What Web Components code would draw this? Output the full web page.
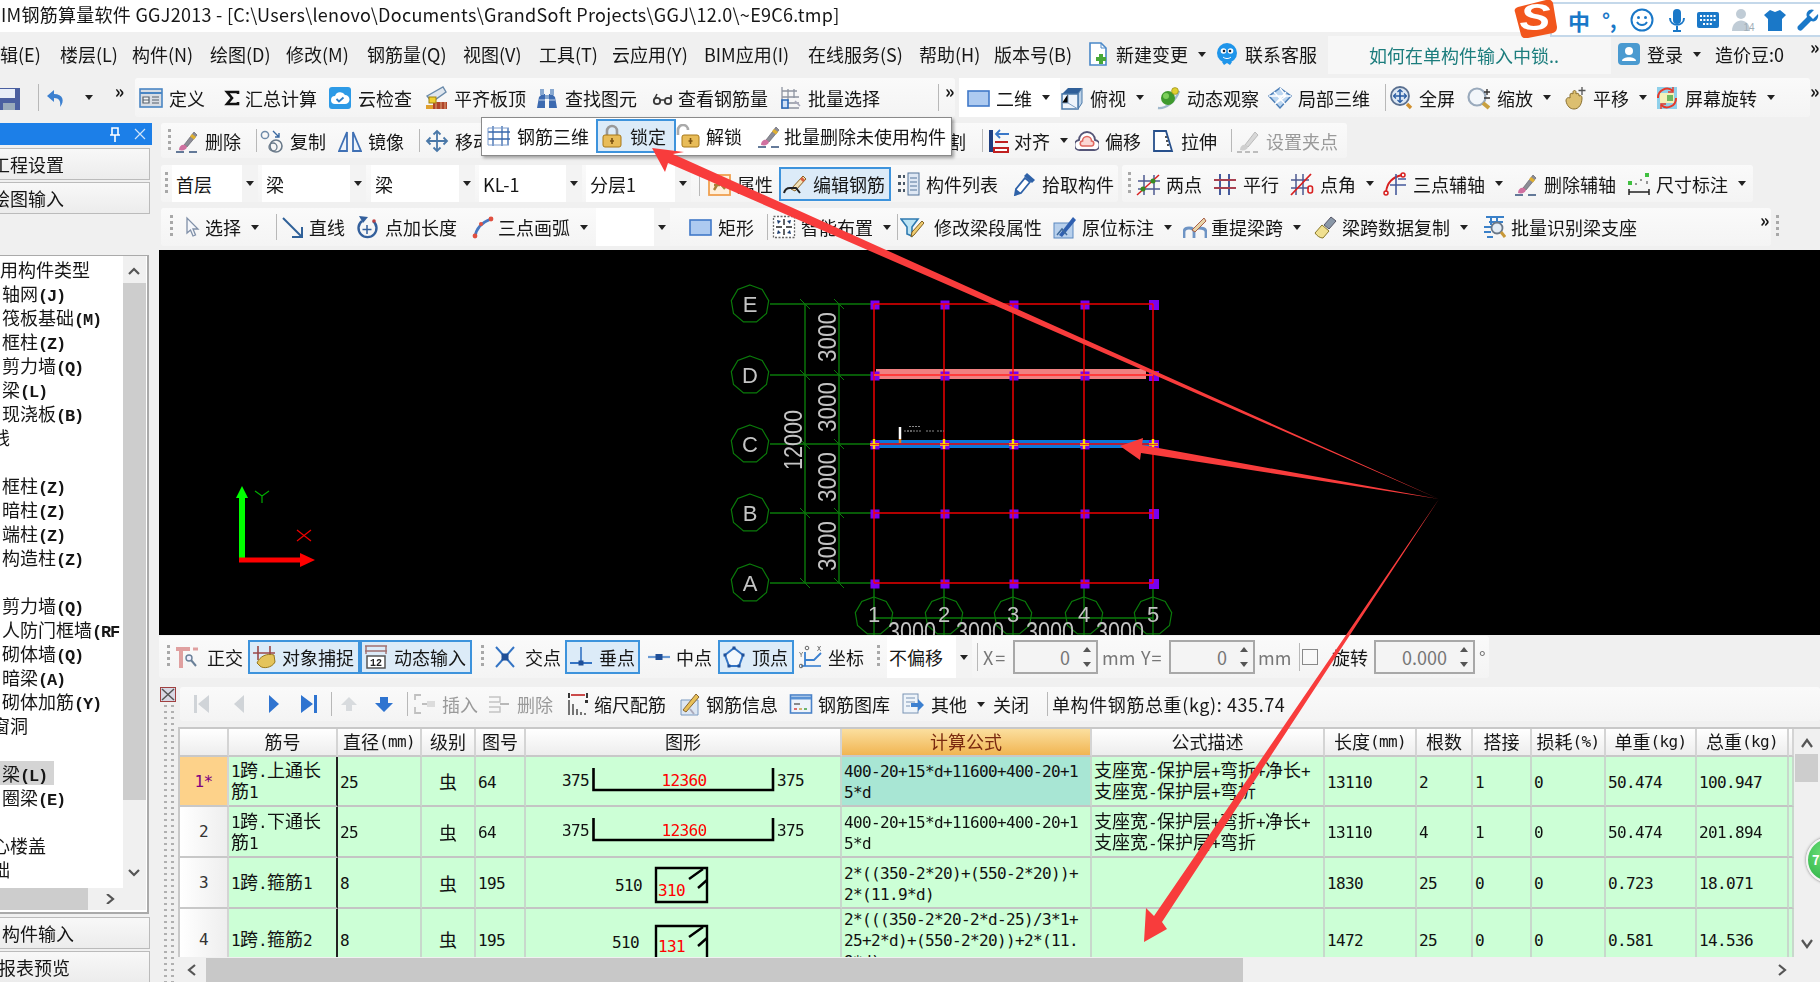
<!DOCTYPE html>
<html lang="zh">
<head>
<meta charset="utf-8">
<title>GGJ2013</title>
<style>
  html, body { margin: 0; width: 1820px; height: 982px; overflow: hidden; background: #f0f0f0; }
  body { font: 18px "Noto Sans CJK SC", "Noto Sans", sans-serif; color: #161616; }
</style>
</head>
<body>
<ggj-app></ggj-app>
<script>
const mix = s => s.replace(/[\x21-\x7e]+/g, m => `<i>${m}</i>`).replace(/\n/g, '<br>');

const BRUSH = '<path d="M9 16L19 3l3 3-10 12z" fill="#8c8c96" stroke="#55555f" stroke-width=".6"/><path d="M17 5l4 3-2 2.500-4-3z" fill="#e0b030"/><path d="M4 21c0-4 3-6 6-5l2 2c-1 3-4 4-8 3z" fill="#d070a0"/><path d="M1 23h8M14 23h8" stroke="#33507a" stroke-width="1.4"/>';

const ICONS = {
  def: '<rect x="1" y="3" width="22" height="18" fill="#d8dde4" stroke="#4a86c4" stroke-width="1.6"/><path d="M1 7h22" stroke="#4a86c4" stroke-width="2"/><path d="M4 11h6v6H4zM13 11h7M13 14h7M13 17h7M4 14h6" fill="#f4f4f4" stroke="#55606c" stroke-width="1.2"/>',
  sigma: '<path d="M18 8V6H7l5 6-5 6h11v-2" fill="none" stroke="#111" stroke-width="2.6"/>',
  cloud: '<rect x="1" y="1" width="22" height="22" rx="3" fill="#2d9ae6"/><path d="M7 18a4 4 0 0 1 0-8 5.500 5.500 0 0 1 10-1 4.500 4.500 0 0 1 0 9z" fill="#fff"/><path d="M8.500 13l2.500 2.500 4.500-4" fill="none" stroke="#2d7fc8" stroke-width="1.8"/>',
  level: '<rect x="9" y="16" width="14" height="7" fill="#b0442a"/><path d="M2 23v-4h7v4z" fill="#e0a030"/><path d="M12 16v7M17 16v7M21 16v7" stroke="#e8c090" stroke-width=".8"/><path d="M3 10L19 1l3 5L8 16z" fill="#dfe6ee" stroke="#6a8aaa" stroke-width="1.4"/><rect x="5" y="11" width="7" height="6" fill="#f0d030" stroke="#a08010"/>',
  binoc: '<path d="M2 22l2-11 3-3h3v14zM22 22l-2-11-3-3h-3v14z" fill="#3c6ab0"/><path d="M5 3h4v6H5zM15 3h4v6h-4zM10 9h4v4h-4z" fill="#88a8d0"/><path d="M4 14h6M14 14h6" stroke="#c4d4ea"/>',
  glasses: '<circle cx="7" cy="15" r="3.200" fill="none" stroke="#3a3a3a" stroke-width="1.8"/><circle cx="18" cy="15" r="3.200" fill="none" stroke="#3a3a3a" stroke-width="1.8"/><path d="M10 14h4M4 14l3-6M21 14v-5" fill="none" stroke="#3a3a3a" stroke-width="1.6"/>',
  bulk: '<path d="M3 1v22M3 5h15M3 11h17M3 17h17M3 22h17M9 3v12M15 3v9" stroke="#8e94a0" stroke-width="1.3"/><path d="M3 14h6v8H3z" fill="#cfe0f6" stroke="#2868b8" stroke-width="1.6"/><path d="M16 15l5 5" stroke="#aab" stroke-width="1.6"/>',
  d2: '<rect x="2" y="5" width="21" height="15" fill="#adcaf0" stroke="#4078c8" stroke-width="1.6"/>',
  view: '<path d="M2 8l6-6h14l-4 6z" fill="#2f5f98"/><path d="M18 8l4-6v15l-4 6z" fill="#bcd2e8" stroke="#4a78a8"/><path d="M2 8h16v15H2z" fill="#eef4fa" stroke="#4a78a8" stroke-width="1.5"/><path d="M8 8v9H2M8 17l10 6" stroke="#7ea0c4"/>',
  orbit: '<path d="M1 22c8 1 18-7 21-17" fill="none" stroke="#a0b8cc" stroke-width="2.4"/><circle cx="11" cy="12" r="7" fill="#3f9a2e"/><circle cx="9" cy="10" r="3" fill="#7ccf5a"/><circle cx="18" cy="5" r="3.400" fill="#e0d030" stroke="#8a8010" stroke-width=".6"/>',
  part3d: '<path d="M12 2l11 8-11 12L1 10z" fill="#bcd6f0" stroke="#4f80b8" stroke-width="1.5"/><path d="M6 6l11 12M12 2l6 8-11 8M1 10h22M18 6L7 18" fill="none" stroke="#fff" stroke-width="1.3"/>',
  full: '<circle cx="11" cy="10" r="9" fill="#dde8f4" stroke="#5a7090" stroke-width="1.8"/><path d="M11 4v12M5 10h12" stroke="#2458a0" stroke-width="1.6"/><path d="M8.500 6L11 3.500 13.500 6M8.500 14l2.500 2.500 2.500-2.500M7 7.500L4.500 10 7 12.500M15 7.500l2.500 2.500-2.500 2.500" fill="none" stroke="#2458a0" stroke-width="1.2"/><path d="M18 18l4 4" stroke="#d09030" stroke-width="3.400"/>',
  zoom: '<circle cx="10" cy="11" r="8.500" fill="#f2f6fa" stroke="#9aaabc" stroke-width="2.2"/><path d="M16 17l6 5" stroke="#c8a040" stroke-width="4"/><path d="M20 3v6M17 6h6M17 12h6" stroke="#333" stroke-width="1.4"/>',
  pan: '<path d="M3 15c0-3 2-4 4-3V9c0-2 2-2 3-1V6c0-2 3-2 3 0v2c1-1 3-1 3 1v1c2-1 3 0 3 2 0 6-3 11-8 11-4 0-7-3-8-8z" fill="#dcbf70" stroke="#8a7030"/><path d="M19 1v8M15.500 4.500h7" stroke="#555" stroke-width="1.3"/>',
  rot: '<rect x="2" y="1" width="20" height="22" fill="#8fd0ea"/><rect x="5" y="7" width="14" height="10" fill="#f4f0b8"/><path d="M12 9h6v6h-6z" fill="#70b860"/><path d="M3 12a9 9 0 0 1 15-7M21 12a9 9 0 0 1-15 7" fill="none" stroke="#e83828" stroke-width="2"/><path d="M18 1v5h-5M6 23v-5h5" fill="none" stroke="#e83828" stroke-width="1.4"/>',
  brush: BRUSH,
  graypen: '<path d="M9 16L19 3l3 3-10 12z" fill="#d8d8d8" stroke="#bbb"/><path d="M4 21c0-4 3-6 6-5l2 2c-1 3-4 4-8 3z" fill="#cfcfcf"/><path d="M1 23h5M9 23h5M17 23h5" stroke="#aaa" stroke-width="1.6"/>',
  copy: '<circle cx="5" cy="6" r="3.600" fill="none" stroke="#6f8aa8" stroke-width="1.5"/><circle cx="16" cy="17" r="6" fill="none" stroke="#6a7a8a" stroke-width="1.6"/><circle cx="13" cy="18" r="4" fill="none" stroke="#6a7a8a" stroke-width="1.3"/><path d="M13 2l6 6m0-4v4h-4" fill="none" stroke="#3a68a0" stroke-width="1.4"/>',
  mirror: '<path d="M1 22L9 3v19zM23 22L15 3v19z" fill="#eef4fb" stroke="#3f70b4" stroke-width="1.8"/>',
  move: '<path d="M12 2v20M2 12h20" stroke="#4a78a8" stroke-width="1.8"/><path d="M8.500 5.500L12 2l3.500 3.500M8.500 18.500L12 22l3.500-3.500M5.500 8.500L2 12l3.500 3.500M18.500 8.500L22 12l-3.500 3.500" fill="none" stroke="#4a78a8" stroke-width="1.8"/>',
  r3d: '<path d="M6 2v20M15 2v20M21 4v17M1 8h22M1 15h22" stroke="#3868ac" stroke-width="1.3"/><path d="M1 4l21 0M1 21h21M1 4v17" stroke="#7c9ccc"/>',
  lock: '<path d="M7 12V7a5 5 0 0 1 10 0v5" fill="none" stroke="#999" stroke-width="2.600"/><rect x="3" y="11" width="18" height="12" rx="2" fill="#e8bc58" stroke="#a87818"/><path d="M12 14v6M10 17h4" stroke="#7a5010" stroke-width="1.6"/>',
  unlock: '<path d="M2 11V6a5 5 0 0 1 10 0" fill="none" stroke="#aaa" stroke-width="2.600"/><rect x="6" y="11" width="17" height="12" rx="2" fill="#e8bc58" stroke="#a87818"/><path d="M14.500 14v6M12.500 17h4" stroke="#7a5010" stroke-width="1.6"/>',
  prop: '<rect x="2" y="3" width="21" height="20" fill="#fff0dc" stroke="#f0a050" stroke-width="1.8"/><path d="M7 18l5-8 6 7M7 13h6" fill="none" stroke="#a88038" stroke-width="2.400"/>',
  edit: '<path d="M8 17L20 4l3 3-11 12z" fill="#f2e2b8" stroke="#8a6020"/><path d="M18 6l3 3" stroke="#d86040" stroke-width="3"/><path d="M1 21c1-4 3-5 6-5h6l4 5" fill="none" stroke="#222" stroke-width="2"/>',
  list: '<path d="M1 3h3v3H1zM6 3h2v3H6zM1 10h3v3H1zM6 10h2v3H6zM1 17h3v3H1zM6 17h2v3H6z" fill="#4a5866"/><rect x="11" y="1" width="11" height="22" fill="#dfe8f4" stroke="#54749a"/><path d="M13 6h7M13 10h7M13 14h7M13 18h7" stroke="#54749a"/>',
  pick: '<path d="M3 23l1-6 9-11 5 4-9 11z" fill="#fff" stroke="#2f62a8" stroke-width="1.8"/><path d="M3 23l1-6 5 4z" fill="#2f62a8"/><path d="M12 4l3-3 8 7-3 3z" fill="#2f62a8"/>',
  two: '<path d="M8 3v20M18 3v20M2 9h22M2 17h22" stroke="#4e5a90" stroke-width="1.5"/><path d="M1 23L23 3" stroke="#d82020" stroke-width="1.5"/><circle cx="7" cy="17" r="2.500" fill="#3a8a20"/><circle cx="17" cy="9" r="2.500" fill="#3a8a20"/>',
  par: '<path d="M7 2v21M16 2v21" stroke="#465a9c" stroke-width="2"/><path d="M1 8h22M1 16h22" stroke="#a84050" stroke-width="2"/>',
  ang: '<path d="M6 2v21M13 2v21M1 8h18M1 16h18" stroke="#4e5a90" stroke-width="1.500"/><path d="M1 23L21 2" stroke="#d82020" stroke-width="1.8"/><rect x="18" y="14" width="4.500" height="7" rx="2" fill="none" stroke="#d82020" stroke-width="1.6"/>',
  arc3: '<path d="M3 20C4 11 10 5 19 3" fill="none" stroke="#d82020" stroke-width="1.800"/><path d="M13 2v21M7 13h16M15 7h8" stroke="#465a9c" stroke-width="1.600"/><circle cx="3" cy="21" r="2" fill="none" stroke="#d82020" stroke-width="1.500"/><circle cx="20" cy="3" r="2" fill="none" stroke="#d82020" stroke-width="1.500"/>',
  dim: '<path d="M2 20h20M2 17v6M22 17v6" stroke="#222" stroke-width="1.500"/><path d="M1 9h4v4H1zM18 1h4v4h-4z" fill="#40c040"/><path d="M8 12h2M13 8h2M20 9v3" stroke="#777" stroke-width="1.500"/>',
  cursor: '<path d="M6 3v15l3.500-3 2.500 6 2.500-1-2.500-6h5z" fill="#f4f6fa" stroke="#8090a8" stroke-width="1.300"/>',
  line: '<path d="M2 3l19 19" stroke="#2f6098" stroke-width="2"/><path d="M21 12v10H11" fill="none" stroke="#2f6098" stroke-width="2"/>',
  ptlen: '<path d="M7 6a9 9 0 1 0 11 0" fill="none" stroke="#34609c" stroke-width="2.400"/><path d="M12 10v9M7.500 14.500h9" stroke="#34609c" stroke-width="1.500"/><path d="M4 1l9 1-5 6z" fill="#34609c"/><circle cx="19" cy="6" r="1.800" fill="#c04040"/>',
  arc: '<path d="M4 22C5 14 9 8 20 4" fill="none" stroke="#4878c0" stroke-width="2.800"/><circle cx="4" cy="21" r="2.400" fill="#e05040"/><circle cx="10" cy="9" r="2" fill="#e05040"/><circle cx="20" cy="4" r="2.400" fill="#e05040"/>',
  rect: '<rect x="2" y="5" width="21" height="15" fill="#adcaf0" stroke="#4078c8" stroke-width="1.600"/>',
  smart: '<rect x="1.500" y="1.500" width="21" height="21" fill="#fff" stroke="#666" stroke-dasharray="2 1.500" stroke-width="1.300"/><path d="M12 4v6M12 14v6M4 12h6M14 12h6" stroke="#222" stroke-width="1.400"/><path d="M5 5l4 1-3 3zM19 5l-1 4-3-3zM5 19l1-4 3 3zM19 19l-4-1 3-3z" fill="#1f3f70"/>',
  modseg: '<path d="M1 4h17l-6 8v9l-5-2v-7z" fill="#bde4f4" stroke="#2f7ab0" stroke-width="1.600"/><path d="M11 22l1-5L22 6l2 2-10 12z" fill="#f0cc70" stroke="#806020"/>',
  inplace: '<rect x="2" y="8" width="19" height="15" fill="#b8d0ec" stroke="#5a88c0"/><path d="M7 20L21 2l3 3L10 22z" fill="#3060b0"/><path d="M5 20l5-6 5 6" fill="none" stroke="#3f6a9c" stroke-width="1.500"/>',
  reext: '<path d="M1 23v-6c0-3 2-4 5-4s5 1 5 4v6M11 23v-6c0-3 2-4 5-4s7 1 7 4v6" fill="none" stroke="#6e94c4" stroke-width="2.800"/><path d="M9 15L21 3l2 3-11 11z" fill="#e8d4a8" stroke="#a86048"/>',
  spancopy: '<path d="M2 18l7-8 7 6-6 7c-3 0-6-2-8-5z" fill="#f0e090" stroke="#88782a"/><path d="M11 10l7-8 5 4-7 8z" fill="#8a98a8" stroke="#556"/>',
  support: '<path d="M4 2h18M7 7h14M2 12h9M2 17h7M5 22h6" stroke="#3a80c8" stroke-width="2"/><path d="M9 2v8M15 2v5" stroke="#3a80c8" stroke-width="2"/><circle cx="15" cy="13" r="5.500" fill="#e4ecf4" stroke="#6a7888" stroke-width="1.800"/><path d="M19 17l4 5" stroke="#c89838" stroke-width="3"/>',
  align: '<path d="M3 1v22" stroke="#1f3f80" stroke-width="4"/><path d="M6 19h14v4H6z" fill="#fff" stroke="#c02020" stroke-width="2"/><path d="M7 13h13" stroke="#c02020" stroke-width="2"/><path d="M21 5H8M12 1L8 5l4 4" fill="none" stroke="#3a78c8" stroke-width="1.800"/>',
  offset: '<path d="M5 21a5 5 0 0 1-1-10 8 8 0 0 1 16 0 5 5 0 0 1-1 10z" fill="#fff" stroke="#557" stroke-width="1.800"/><path d="M8 17a2.500 2.500 0 0 1-.500-5 4.500 4.500 0 0 1 9 0 2.500 2.500 0 0 1-.500 5z" fill="#fbd8d4" stroke="#e06860" stroke-width="1.600"/>',
  stretch: '<path d="M3 22V2h12l6 20z" fill="#fff" stroke="#27508c" stroke-width="1.800"/><path d="M14 8h2M15 12h2M16 16h2" stroke="#555" stroke-width="1.800"/>',
  ortho: '<path d="M1 4h14M6 4v19" stroke="#e0a0a0" stroke-width="4"/><path d="M18 4h5" stroke="#e0a0a0" stroke-width="3"/><circle cx="14" cy="13" r="3" fill="#eef" stroke="#6a8098" stroke-width="1.400"/><path d="M16 15l5 6" stroke="#6a8098" stroke-width="2"/>',
  snap: '<path d="M1 8h22M6 1v14M18 1v14" stroke="#9a4848" stroke-width="1.600"/><path d="M5 18c3-7 10-10 17-8l1 7c-3 6-12 7-15 4z" fill="#e4c45c" stroke="#98781c"/>',
  dyn: '<path d="M1 1h22M1 6h22" stroke="#a07070" stroke-width="1.400"/><path d="M2 1v8M22 1v8" stroke="#a07070" stroke-width="1.400"/><rect x="3" y="11" width="18" height="12" fill="#fff" stroke="#555" stroke-width="1.500"/><text x="12" y="21" font-size="10" font-family="Liberation Mono" font-weight="700" text-anchor="middle" fill="#222">12</text>',
  cross: '<path d="M3 2l18 20M21 2L3 22" stroke="#3474c4" stroke-width="2"/><rect x="8.500" y="8.500" width="7" height="7" fill="#1f4f98"/>',
  perp: '<path d="M1 18h22" stroke="#3474c4" stroke-width="2"/><path d="M12 2v16" stroke="#3474c4" stroke-width="1.600"/><rect x="9.500" y="15.500" width="5" height="5" fill="#1f4f98"/>',
  mid: '<path d="M1 12h22" stroke="#6a9ad4" stroke-width="2.200"/><rect x="8.500" y="9" width="7" height="6" fill="#1f4f98"/>',
  apex: '<path d="M12 3l9 7-4 11H7L3 10z" fill="#f4f8fc" stroke="#3474c4" stroke-width="2"/><path d="M10.500 1.500h3v3h-3zM1.500 8.500h3v3h-3zM19.500 8.500h3v3h-3zM5.500 19.500h3v3h-3zM15.500 19.500h3v3h-3z" fill="#1f4f98"/>',
  coord: '<path d="M6 7v14M22 8l-7 7H6" fill="none" stroke="#3a80d0" stroke-width="1.800"/><path d="M2 21h20" stroke="#3a80d0" stroke-width="1.600"/><circle cx="8" cy="3" r="1.800" fill="none" stroke="#666"/><circle cx="2" cy="21" r="1.800" fill="none" stroke="#666"/><text x="20" y="6" font-size="7" font-family="Liberation Mono" text-anchor="middle" fill="#555">X</text><text x="2" y="12" font-size="7" font-family="Liberation Mono" text-anchor="middle" fill="#555">Y</text>',
  first: '<path d="M5 3h3v18H5zM20 3L9 12l11 9z" fill="#d0d4d8"/>',
  prev: '<path d="M17 3L7 12l10 9z" fill="#d0d4d8"/>',
  next: '<path d="M7 3l10 9-10 9z" fill="#2f74d0"/>',
  last: '<path d="M18 3h3v18h-3zM5 3l12 9-12 9z" fill="#2f74d0"/>',
  up: '<path d="M12 5l8 8h-5v6H9v-6H4z" fill="#d8dbde"/>',
  down: '<path d="M8 5h8v6h5l-9 9-9-9h5z" fill="#2f74d0"/>',
  ins: '<path d="M9 3H3v5M3 15v6h6" fill="none" stroke="#c0c0c0" stroke-width="1.800"/><path d="M10 12h5" stroke="#b0b0b0" stroke-width="1.600"/><rect x="15" y="9" width="8" height="6" fill="#dcdcdc"/>',
  del2: '<path d="M2 5h11v5H2M2 15h11v5H2" fill="none" stroke="#c4c4c4" stroke-width="1.500"/><path d="M13 12h9" stroke="#b0b0b0" stroke-width="1.800"/>',
  scale: '<path d="M2 23V8M6 23V12M10 23v-6M14 23v-3M18 23v-2" stroke="#666" stroke-width="1.800"/><path d="M4 3h14" stroke="#c02020" stroke-width="1.600"/><path d="M2 1v5M20 1v5" stroke="#222" stroke-width="1.800"/><rect x="18" y="8" width="3" height="3" fill="#333"/>',
  info: '<path d="M3 8h17v15H3z" fill="#dce6f2" stroke="#7a9ac0"/><path d="M5 18L18 2l3 3L8 20z" fill="#e8c058" stroke="#886630"/><path d="M12 17l4 5" stroke="#aab" stroke-width="2"/>',
  lib: '<rect x="1.500" y="3" width="21" height="18" fill="#eef3fa" stroke="#4a82c8" stroke-width="1.600"/><path d="M2 6h20" stroke="#5a92d4" stroke-width="3"/><path d="M5 12h6" stroke="#666" stroke-width="1.500"/><path d="M5 17h3" stroke="#d04040" stroke-width="1.500"/><path d="M10 17h3" stroke="#c8a040" stroke-width="1.500"/><path d="M15 17h3" stroke="#40a040" stroke-width="1.500"/>',
  other: '<rect x="2" y="2" width="15" height="19" fill="#eef4fa" stroke="#7a94b4"/><path d="M5 6h9M5 10h9M5 14h4" stroke="#7a94b4"/><path d="M10 11h7V7l6 6-6 6v-4h-7z" fill="#3c80d0"/>',
  newf: '<path d="M4 1h11l5 5v17H4z" fill="#fff" stroke="#4a88c8" stroke-width="1.600"/><path d="M15 1v5h5" fill="none" stroke="#4a88c8"/><path d="M13 12h4v3h3v4h-3v3h-4v-3h-3v-4h3z" fill="#48a838"/>',
  service: '<circle cx="12" cy="11" r="10" fill="#1f95ea"/><circle cx="8.500" cy="9" r="2.800" fill="#fff"/><circle cx="15.500" cy="9" r="2.800" fill="#fff"/><circle cx="9" cy="9" r="1.300" fill="#123"/><circle cx="15" cy="9" r="1.300" fill="#123"/><path d="M8 15c2 2 6 2 8 0" fill="none" stroke="#fff"/><path d="M7 20l2 3 3-2 3 2 2-3z" fill="#1f95ea"/>',
  login: '<rect x="1" y="1" width="22" height="22" rx="4" fill="#4a9ad0"/><circle cx="12" cy="9" r="4" fill="#fff"/><path d="M5 19c0-5 14-5 14 0z" fill="#fff"/>',
  save: '<rect x="-6" y="2" width="26" height="26" fill="#4a5fa0"/><rect x="-2" y="3" width="17" height="9" fill="#e8eef8"/><rect x="3" y="17" width="12" height="10" fill="#9ab"/>',
  undo: '<path d="M9 4L2 10l7 6v-4c5 0 7 3 6 9 5-6 3-13-6-13z" fill="#3c80d0"/>'
};

// small reusable template helper
function make(css, html) {
  const t = document.createElement('template');
  t.innerHTML = `<style>${css}</style>${html}`;
  return t;
}

const itemTpl = make(`
  :host { display: flex; flex: none; align-items: center; box-sizing: border-box; height: 100%; white-space: nowrap; }
  :host([on]) { height: 34px; align-self: center; padding-left: 4px; background: #dcebf8; box-shadow: inset 0 0 0 2px #3d93dc; }
  :host([gray]) { color: #9a9a9a; }
  :host([up]) { font-weight: 700; transform: translateY(-8px); }
  svg { flex: none; width: 24px; height: 24px; margin-right: var(--gap, 6px); overflow: hidden; }
  .arrow { flex: none; margin-left: 10px; border: 4px solid transparent; border-top: 5px solid #222; border-bottom: 0; }
`, `<span id="ic"></span><slot></slot><span id="ar"></span>`);

class ToolItem extends HTMLElement {
  constructor() {
    super();
    this.attachShadow({ mode: 'open' }).appendChild(itemTpl.content.cloneNode(true));
  }
  connectedCallback() {
    if (this.hasAttribute('w')) this.style.width = this.getAttribute('w') + 'px';
    if (this.hasAttribute('gap')) this.style.setProperty('--gap', this.getAttribute('gap') + 'px');
    const name = this.getAttribute('icon');
    const ic = this.shadowRoot.getElementById('ic');
    if (name) {
      ic.style.display = 'contents';
      ic.innerHTML = `<svg viewBox="0 0 24 24">${ICONS[name] || ''}</svg>`;
    }
    if (this.hasAttribute('arrow')) this.shadowRoot.getElementById('ar').className = 'arrow';
  }
}
customElements.define('tool-item', ToolItem);

const sepTpl = make(`
  :host { display: flex; flex: none; align-items: center; justify-content: center; height: 100%; }
  .line { width: 1px; height: 68%; background: #b8b8b8; }
  .grip { width: 3px; height: 24px; background: repeating-linear-gradient(#a8a8a8 0 3px, transparent 3px 6px); }
`, `<div id="d"></div>`);

class ToolSep extends HTMLElement {
  constructor() {
    super();
    this.attachShadow({ mode: 'open' }).appendChild(sepTpl.content.cloneNode(true));
  }
  connectedCallback() {
    this.style.width = (this.getAttribute('w') || 8) + 'px';
    this.shadowRoot.getElementById('d').className = this.getAttribute('kind') || '';
  }
}
customElements.define('tool-sep', ToolSep);

const stripTpl = make(`
  :host { display: flex; flex: none; align-items: stretch; box-sizing: border-box; background: linear-gradient(#fafafa, #f4f4f4); border-radius: 3px; }
`, `<slot></slot>`);

class ToolStrip extends HTMLElement {
  constructor() {
    super();
    this.attachShadow({ mode: 'open' }).appendChild(stripTpl.content.cloneNode(true));
  }
  connectedCallback() {
    if (this.hasAttribute('w')) this.style.width = this.getAttribute('w') + 'px';
    if (this.hasAttribute('h')) this.style.height = this.getAttribute('h') + 'px';
    if (this.hasAttribute('pad')) this.style.paddingLeft = this.getAttribute('pad') + 'px';
    if (this.hasAttribute('ml')) this.style.marginLeft = this.getAttribute('ml') + 'px';
  }
}
customElements.define('tool-strip', ToolStrip);

const comboTpl = make(`
  :host { display: flex; flex: none; align-items: center; box-sizing: border-box; height: 100%; background: #fff; padding-left: 4px; position: relative; white-space: nowrap; }
  .btn { position: absolute; right: 0; top: 0; bottom: 0; width: 16px; background: #f3f3f3; display: flex; align-items: center; justify-content: center; }
  .btn i { border: 4px solid transparent; border-top: 5px solid #222; border-bottom: 0; }
`, `<slot></slot><div class="btn"><i></i></div>`);

class ComboBox extends HTMLElement {
  constructor() {
    super();
    this.attachShadow({ mode: 'open' }).appendChild(comboTpl.content.cloneNode(true));
  }
  connectedCallback() {
    this.style.width = this.getAttribute('w') + 'px';
    if (this.hasAttribute('ml')) this.style.marginLeft = this.getAttribute('ml') + 'px';
  }
}
customElements.define('combo-box', ComboBox);

const spinTpl = make(`
  :host { display: flex; flex: none; align-self: center; align-items: center; justify-content: flex-end; box-sizing: border-box; height: 34px; border: 2px solid #a8a8a8; background: #f4f4f4; color: #777; padding-right: 26px; position: relative; }
  .s { position: absolute; right: 5px; border: 4px solid transparent; }
  .u { top: 5px; border-bottom: 5px solid #555; border-top: 0; }
  .d { bottom: 5px; border-top: 5px solid #555; border-bottom: 0; }
`, `<slot></slot><i class="s u"></i><i class="s d"></i>`);

class SpinInput extends HTMLElement {
  constructor() {
    super();
    this.attachShadow({ mode: 'open' }).appendChild(spinTpl.content.cloneNode(true));
  }
  connectedCallback() { this.style.width = this.getAttribute('w') + 'px'; }
}
customElements.define('spin-input', SpinInput);

class ImeBar extends HTMLElement {
  constructor() {
    super();
    this.attachShadow({ mode: 'open' }).innerHTML = `<style>
      :host { position: absolute; left: 1514px; top: 0; width: 306px; height: 38px; display: flex; }
      .logo { flex: none; width: 44px; height: 38px; position: relative; z-index: 1; }
      .bar { flex: none; width: 270px; height: 35px; margin: 2px 0 0 -8px; background: #fff; border: 2px solid #c4d8ea; border-right: 0; display: flex; align-items: center; color: #1a78c8; font-weight: 700; box-sizing: border-box; }
      svg.i { flex: none; width: 24px; height: 24px; }
    </style>
    <svg class="logo" viewBox="0 0 44 38"><path d="M4 7L32 0c3-1 6 0 7 3l4 24c0 3-1 5-4 6L14 38c-3 1-6 0-7-3L1 12c-1-2 0-4 3-5z" fill="#f2561c"/><text x="21" y="30" font-family="Liberation Sans" font-size="36" font-weight="700" font-style="italic" fill="#fff" text-anchor="middle" textLength="31" lengthAdjust="spacingAndGlyphs">S</text></svg>
    <div class="bar">
      <span style="margin-left:16px;width:35px;font-size:22px">中</span>
      <span style="width:29px;font-size:20px">°,</span>
      <svg class="i" viewBox="0 0 24 24" style="margin-right:11px"><circle cx="12" cy="12" r="10.500" fill="none" stroke="#1a78c8" stroke-width="2"/><circle cx="8.500" cy="9.500" r="1.500" fill="#1a78c8"/><circle cx="15.500" cy="9.500" r="1.500" fill="#1a78c8"/><path d="M7 14c2 4 8 4 10 0" fill="none" stroke="#1a78c8" stroke-width="1.800"/></svg>
      <svg class="i" viewBox="0 0 24 24" style="margin-right:7px"><rect x="8" y="1" width="8" height="15" rx="4" fill="#1a78c8"/><path d="M5 10c0 9 14 9 14 0M12 18v5M8 23h8" fill="none" stroke="#1a78c8" stroke-width="2"/></svg>
      <svg class="i" viewBox="0 0 24 24" style="margin-right:11px"><rect x="1" y="4" width="22" height="16" rx="2" fill="#1a78c8"/><path d="M4 8h16M4 12h16M7 16h10" stroke="#fff" stroke-width="2" stroke-dasharray="2 1.400"/></svg>
      <svg class="i" viewBox="0 0 24 24" style="margin-right:8px"><circle cx="10" cy="6" r="5" fill="#c0ccd6"/><path d="M1 23c0-14 18-14 18 0z" fill="#c0ccd6"/><text x="18" y="23" font-size="10" font-family="Liberation Sans" font-weight="400" fill="#a0aeb8" text-anchor="middle">14</text></svg>
      <svg class="i" viewBox="0 0 24 24" style="margin-right:9px"><path d="M7 2l5 2 5-2 6 5-4 4v12H5V11L1 7z" fill="#1a78c8"/></svg>
      <svg class="i" viewBox="0 0 24 24"><path d="M22 6l-5 5-4-4 5-5c-4-2-9 2-7 7L2 18c-2 3 2 6 4 4l9-9c5 2 8-3 7-7z" fill="#1a78c8"/></svg>
    </div>`;
  }
}
customElements.define('ime-bar', ImeBar);

class TitleBar extends HTMLElement {
  constructor() {
    super();
    this.attachShadow({ mode: 'open' }).innerHTML = `<style>
      :host { display: block; flex: none; height: 32px; background: #fff; line-height: 28px; white-space: nowrap; overflow: visible; padding-left: 1px; letter-spacing: .28px; }
    </style><slot></slot>`;
  }
}
customElements.define('title-bar', TitleBar);

const LIST = [
  ['用构件类型', 0], ['轴网(J)'], ['筏板基础(M)'], ['框柱(Z)'], ['剪力墙(Q)'], ['梁(L)'], ['现浇板(B)'], ['线', -8], [''],
  ['框柱(Z)'], ['暗柱(Z)'], ['端柱(Z)'], ['构造柱(Z)'], [''],
  ['剪力墙(Q)'], ['人防门框墙(RF'], ['砌体墙(Q)'], ['暗梁(A)'], ['砌体加筋(Y)'], ['窗洞', -8], [''],
  ['梁(L)', 2, 1], ['圈梁(E)'], [''], ['心楼盖', -8], ['础', -8]
];

class SidePanel extends HTMLElement {
  constructor() {
    super();
    const rows = LIST.map(([t, x = 2, sel]) =>
      `<div class="row ${sel ? 'sel' : ''}"><span style="margin-left:${x}px">${mix(t)}</span></div>`).join('');
    this.attachShadow({ mode: 'open' }).innerHTML = `<style>
      :host { display: flex; flex-direction: column; flex: none; width: 152px; height: 859px; overflow: hidden; background: #f0f0f0; }
      i { font: 700 17px "Liberation Mono", monospace; letter-spacing: -1.2px; font-style: normal; }
      .head { flex: none; height: 22px; background: #1c7fe8; display: flex; justify-content: flex-end; align-items: center; gap: 13px; padding-right: 6px; }
      .tab { flex: none; box-sizing: border-box; height: 32px; background: linear-gradient(#f8f8f8, #ececec); border: 1px solid #bbb; border-left: 0; line-height: 30px; white-space: nowrap; overflow: hidden; margin-right: 2px; }
      .frame { flex: none; box-sizing: border-box; height: 659px; margin-top: 41px; border: 1px solid #aaa; border-left: 0; border-width: 1px 2px 2px 0; display: grid; grid-template: 632px 22px / 123px 23px; background: #fff; width: 149px; }
      .list { overflow: hidden; padding-top: 1px; }
      .row { height: 24px; line-height: 24px; white-space: nowrap; width: 123px; overflow: hidden; }
      .row.sel { background: #d4d4d4; width: 54px; }
      .vs { background: #f0f0f0; position: relative; }
      .vs b { position: absolute; left: 0; right: 0; top: 27px; height: 517px; background: #cdcdcd; }
      .hs { grid-column: 1 / 3; background: #f0f0f0; position: relative; }
      .hs b { position: absolute; left: 0; top: 0; bottom: 0; width: 88px; background: #cdcdcd; }
      svg.a { position: absolute; width: 14px; height: 10px; }
    </style>
    <div class="head">
      <svg width="12" height="15" viewBox="0 0 12 15"><path d="M3 1h6v7H3zM1 8h10M6 8v7" fill="none" stroke="#fff" stroke-width="1.600"/></svg>
      <svg width="12" height="12" viewBox="0 0 12 12"><path d="M1 1l10 10M11 1L1 11" stroke="#cfe4fa" stroke-width="1.200"/></svg>
    </div>
    <div class="tab" style="margin-top:3px;text-indent:-8px">工程设置</div>
    <div class="tab" style="margin-top:2px;text-indent:-8px">绘图输入</div>
    <div class="frame">
      <div class="list">${rows}</div>
      <div class="vs"><b></b>
        <svg class="a" style="left:4px;top:10px" viewBox="0 0 14 10"><path d="M2 8l5-5 5 5" fill="none" stroke="#555" stroke-width="2.200"/></svg>
        <svg class="a" style="left:4px;bottom:10px" viewBox="0 0 14 10"><path d="M2 2l5 5 5-5" fill="none" stroke="#555" stroke-width="2.200"/></svg>
      </div>
      <div class="hs"><b></b>
        <svg class="a" style="left:103px;top:6px" viewBox="0 0 14 10"><path d="M4 0l6 5-6 5" fill="none" stroke="#555" stroke-width="2.200"/></svg>
      </div>
    </div>
    <div class="tab" style="margin-top:3px;padding-left:2px">构件输入</div>
    <div class="tab" style="margin-top:2px;text-indent:-2px">报表预览</div>`;
  }
}
customElements.define('side-panel', SidePanel);

class CadCanvas extends HTMLElement {
  constructor() {
    super();
    const xs = [874, 944, 1013, 1084, 1153];
    const ys = { E: 304, D: 375, C: 444, B: 513, A: 583 };
    const ny = Object.values(ys);
    const G = '#0a7a0a';
    const poly = (cx, cy, r) => Array.from({ length: 9 }, (_, i) => {
      const a = Math.PI * 2 * i / 9 - Math.PI / 2;
      return `${(cx + r * Math.cos(a)).toFixed(1)},${(cy + r * Math.sin(a)).toFixed(1)}`;
    }).join(' ');
    let s = '';
    // axis grid lines and dimension lines
    for (const y of ny) {
      s += `<path d="M770 ${y}H874" stroke="${G}" stroke-width="1.400"/>`;
      s += `<path d="M800 ${y - 5}l10 10M834 ${y - 5}l10 10" stroke="${G}"/>`;
    }
    s += `<path d="M805 304V583M839 304V583" stroke="${G}" stroke-width="1.400"/>`;
    for (const x of xs) s += `<path d="M${x} 583V635" stroke="${G}" stroke-width="1.400"/>`;
    s += `<path d="M874 618H1153" stroke="${G}" stroke-width="1.400"/>`;
    // axis bubbles
    for (const [k, y] of Object.entries(ys)) {
      s += `<polygon points="${poly(750, y, 19)}" fill="#000" stroke="${G}" stroke-width="1.200"/>`;
      s += `<text x="750" y="${y + 8}" class="t" font-size="22" text-anchor="middle">${k}</text>`;
    }
    xs.forEach((x, i) => {
      s += `<polygon points="${poly(x, 616, 19)}" fill="none" stroke="${G}" stroke-width="1.200"/>`;
      s += `<text x="${x}" y="622" class="t" font-size="22" text-anchor="middle">${i + 1}</text>`;
    });
    // dimension labels
    for (const y of [337, 407, 477, 546]) {
      s += `<text transform="translate(836,${y}) rotate(-90)" class="t" font-size="26" text-anchor="middle" textLength="50" lengthAdjust="spacingAndGlyphs">3000</text>`;
    }
    s += `<text transform="translate(802,440) rotate(-90)" class="t" font-size="26" text-anchor="middle" textLength="60" lengthAdjust="spacingAndGlyphs">12000</text>`;
    for (const x of [912, 980, 1050, 1120]) {
      s += `<text x="${x}" y="640" class="t" font-size="26" text-anchor="middle" textLength="48" lengthAdjust="spacingAndGlyphs">3000</text>`;
    }
    // beam D, beam C
    s += `<rect x="876" y="369" width="270" height="10" fill="#f08080"/>`;
    s += `<rect x="876" y="440" width="277" height="8" fill="#0c78d8"/>`;
    // columns
    for (const x of xs) for (const y of ny) {
      const r = x === 1153 ? 5 : 4.500;
      s += `<rect x="${x - r + 1}" y="${y - r + 1}" width="${2 * r}" height="${2 * r}" fill="#7a00f0"/>`;
    }
    // red grid
    for (const x of xs) s += `<path d="M${x} 304V583" stroke="#f00" stroke-width="1.400"/>`;
    for (const y of ny) s += `<path d="M874 ${y}H1153" stroke="${y === 375 ? '#ff3b3b' : '#e00'}" stroke-width="${y === 375 ? 2 : 1.400}"/>`;
    // yellow grips on the picked beam
    for (const x of xs) s += `<path d="M${x - 4} 444.500h9M${x} 439v10" stroke="#ffe000" stroke-width="2.400"/><path d="M${x - 4} 444.500h9" stroke="#f03020"/>`;
    s += `<path d="M900 427V439" stroke="#fff" stroke-width="2.500"/><path d="M900 439V443" stroke="#e08020" stroke-width="2.500"/>`;
    s += `<path d="M909 426.500h12M904 431h8M907 431h14M926 431h8M937 431h7" stroke="#888" stroke-dasharray="2 1"/>`;
    // coordinate icon
    s += `<path d="M242 560V496" stroke="#0f0" stroke-width="6"/><path d="M242 486l6 12h-12z" fill="#0f0"/>`;
    s += `<path d="M239 560h62" stroke="#f00" stroke-width="5"/><path d="M300 553l15 7-15 7z" fill="#f00"/>`;
    s += `<path d="M255 491l7 5 7-5M262 496v7" fill="none" stroke="#0a0" stroke-width="1.200"/>`;
    s += `<path d="M297 530l14 11M311 530l-14 11" stroke="#e00" stroke-width="1.200"/>`;

    this.attachShadow({ mode: 'open' }).innerHTML = `<style>
      :host { display: block; flex: none; height: 385px; background: #000; overflow: hidden; }
      svg { display: block; }
      .t { font-family: "Liberation Sans", sans-serif; fill: #c4c4c4; }
    </style><svg width="1661" height="385" viewBox="159 250 1661 385">${s}</svg>`;
  }
}
customElements.define('cad-canvas', CadCanvas);

const COLS = [49, 109, 84, 54, 50, 316, 250, 233, 92, 56, 59, 74, 91, 92, 5];
const HEAD = ['', '筋号', '直径(mm)', '级别', '图号', '图形', '计算公式', '公式描述', '长度(mm)', '根数', '搭接', '损耗(%)', '单重(kg)', '总重(kg)', ''];

const bentBar = `<svg width="314" height="49" viewBox="0 0 314 49">
  <path d="M67.500 11V33H247V11" fill="none" stroke="#000" stroke-width="2.600"/>
  <text x="36" y="29" class="n">375</text><text x="251" y="29" class="n">375</text>
  <text x="158" y="29" class="n r" text-anchor="middle">12360</text></svg>`;
const stirrup = (lx, ly, rt, ry, top, h) => `<svg width="314" height="${h}" viewBox="0 0 314 ${h}">
  <path d="M130 ${top}H181V${top + 34}H130Z" fill="none" stroke="#000" stroke-width="2.400"/>
  <path d="M163 ${top + 11}L177 ${top + 1}M172 ${top + 20}L181 ${top + 12}" stroke="#000" stroke-width="2.400"/>
  <text x="${lx}" y="${ly}" class="n">510</text><text x="132" y="${ry}" class="n r">${rt}</text></svg>`;

const ROWS = [
  { h: 50, head: '1*', hot: 1, c: ['1跨.上通长\n筋1', '25', '虫', '64', bentBar, '400-20+15*d+11600+400-20+1\n5*d', '支座宽-保护层+弯折+净长+\n支座宽-保护层+弯折', '13110', '2', '1', '0', '50.474', '100.947', ''] },
  { h: 51, head: '2', c: ['1跨.下通长\n筋1', '25', '虫', '64', bentBar, '400-20+15*d+11600+400-20+1\n5*d', '支座宽-保护层+弯折+净长+\n支座宽-保护层+弯折', '13110', '4', '1', '0', '50.474', '201.894', ''] },
  { h: 51, head: '3', c: ['1跨.箍筋1', '8', '虫', '195', stirrup(89, 33, '310', 38, 10, 49), '2*((350-2*20)+(550-2*20))+\n2*(11.9*d)', '', '1830', '25', '0', '0', '0.723', '18.071', ':'] },
  { h: 62, head: '4', c: ['1跨.箍筋2', '8', '虫', '195', stirrup(86, 39, '131', 43, 17, 60), '2*(((350-2*20-2*d-25)/3*1+\n25+2*d)+(550-2*20))+2*(11.\n9*d)', '', '1472', '25', '0', '0', '0.581', '14.536', ':'] }
];

class RebarTable extends HTMLElement {
  constructor() {
    super();
    let html = HEAD.map((h, i) => `<div class="hd ${i === 6 ? 'pick' : ''}">${mix(h)}</div>`).join('');
    for (const r of ROWS) {
      html += `<div class="rh ${r.hot ? 'hot' : ''}" style="height:${r.h}px">${mix(r.head)}</div>`;
      r.c.forEach((v, i) => {
        const cls = (i === 0 ? 'bar ' : '') + (i === 2 ? 'mid ' : '') + (i === 4 ? 'shape ' : '') + (i === 5 && r.hot ? 'sel ' : '');
        html += `<div class="cell ${cls}" style="height:${r.h}px">${i === 4 ? v : `<span>${mix(v)}</span>`}</div>`;
      });
    }
    this.attachShadow({ mode: 'open' }).innerHTML = `<style>
      :host { display: flex; flex: none; height: 230px; border-left: 2px solid #c8c8c8; border-top: 2px solid #c8c8c8; box-sizing: border-box; background: #f0f0f0; }
      i { font: normal 16px "DejaVu Sans Mono", monospace; letter-spacing: -.63px; }
      .grid { flex: none; width: 1615px; height: 228px; overflow: hidden; display: grid; grid-template-columns: ${COLS.map(c => c + 'px').join(' ')}; grid-auto-rows: min-content; }
      .hd { box-sizing: border-box; height: 28px; padding-bottom: 2px; background: linear-gradient(#fff, #ededed); border-right: 2px solid #d4d4d4; border-bottom: 2px solid #c8c8c8; display: flex; align-items: center; justify-content: center; white-space: nowrap; overflow: hidden; }
      .hd.pick { background: linear-gradient(#fbdf9f, #f1b552); color: #7a2a10; }
      .rh { box-sizing: border-box; border-right: 2px solid #d4d4d4; border-bottom: 2px solid #c8c8c8; background: linear-gradient(90deg, #fff, #eee); display: flex; align-items: center; justify-content: center; color: #333; }
      .rh.hot { background: #fdd28a; color: #800080; }
      .cell { box-sizing: border-box; background: #ccffd6; border-right: 2px solid #c8d8cc; border-bottom: 2px solid #c4c4c4; display: flex; align-items: center; padding-left: 2px; line-height: 18px; overflow: hidden; color: #111; white-space: nowrap; }
      .cell.bar { border-right: 2px solid #222; white-space: normal; }
      .cell.mid { justify-content: center; padding: 0; }
      .cell.sel { background: #a8e6d4; }
      .cell.shape { padding: 0; }
      .n { font: 16px "DejaVu Sans Mono", monospace; letter-spacing: -.63px; fill: #111; }
      .r { fill: #f00; }
      .vs { flex: 1; position: relative; background: #f0f0f0; }
      .vs b { position: absolute; left: 0; right: 2px; top: 25px; height: 28px; background: #cdcdcd; }
      svg.a { position: absolute; left: 5px; width: 14px; height: 12px; }
    </style>
    <div class="grid">${html}</div>
    <div class="vs"><b></b>
      <svg class="a" style="top:8px" viewBox="0 0 14 12"><path d="M2 10l5-7 5 7" fill="none" stroke="#555" stroke-width="2.200"/></svg>
      <svg class="a" style="top:209px" viewBox="0 0 14 12"><path d="M2 2l5 7 5-7" fill="none" stroke="#555" stroke-width="2.200"/></svg>
    </div>`;
  }
}
customElements.define('rebar-table', RebarTable);

class TableScroll extends HTMLElement {
  constructor() {
    super();
    this.attachShadow({ mode: 'open' }).innerHTML = `<style>
      :host { display: flex; flex: none; align-items: center; height: 25px; background: #f0f0f0; }
      b { flex: none; width: 1037px; height: 24px; background: #c8c8c8; margin-left: 8px; }
      svg { flex: none; width: 12px; height: 14px; }
    </style>
    <svg style="margin-left:8px" viewBox="0 0 12 14"><path d="M9 2L3 7l6 5" fill="none" stroke="#555" stroke-width="2.200"/></svg>
    <b></b>
    <svg style="margin-left:533px" viewBox="0 0 12 14"><path d="M3 2l6 5-6 5" fill="none" stroke="#555" stroke-width="2.200"/></svg>`;
  }
}
customElements.define('table-scroll', TableScroll);

class GripRail extends HTMLElement {
  constructor() {
    super();
    this.attachShadow({ mode: 'open' }).innerHTML = `<style>
      :host { display: flex; flex-direction: column; flex: none; width: 19px; }
      svg { flex: none; margin-left: 1px; }
      div { flex: 1; width: 11px; margin: 3px 0 0 5px; background:
        repeating-linear-gradient(#b0b0b0 0 2px, transparent 2px 6px) 0 0 / 3px 100% no-repeat,
        repeating-linear-gradient(#b0b0b0 0 2px, transparent 2px 6px) 7px 0 / 3px 100% no-repeat; }
    </style>
    <svg width="16" height="15" viewBox="0 0 16 15"><rect x=".5" y=".5" width="15" height="14" fill="#d8d8e4" stroke="#a04040"/><path d="M2 2l12 11M14 2L2 13" stroke="#555" stroke-width="1.500"/></svg>
    <div></div>`;
  }
}
customElements.define('grip-rail', GripRail);

// the flyout of the first toolbar, it lies over the row below
class FlyoutBar extends HTMLElement {
  constructor() {
    super();
    this.attachShadow({ mode: 'open' }).innerHTML = `<style>
      :host { position: absolute; left: 481px; top: 117px; width: 471px; height: 39px; box-sizing: border-box; background: #fff; border: 1px solid #8a8a8a; box-shadow: 2px 2px 3px rgba(0,0,0,.35); display: flex; align-items: center; padding: 0 0 1px 5px; }
    </style><slot></slot>`;
  }
}
customElements.define('flyout-bar', FlyoutBar);

class FloatBall extends HTMLElement {
  constructor() {
    super();
    this.attachShadow({ mode: 'open' }).innerHTML = `<style>
      :host { position: absolute; left: 1806px; top: 837px; width: 46px; height: 46px; box-sizing: border-box; border-radius: 50%; border: 2px solid #f4f4f4; background: radial-gradient(circle at 40% 35%, #6ee07a, #1fa83a); box-shadow: 0 0 3px #777; color: #fff; font-size: 13px; font-weight: 700; line-height: 42px; padding-left: 4px; }
    </style>70`;
  }
}
customElements.define('float-ball', FloatBall);

// red callout arrows drawn by the user over the screenshot
class NoteArrows extends HTMLElement {
  constructor() {
    super();
    const tail = '1439,499';
    this.attachShadow({ mode: 'open' }).innerHTML = `<style>
      :host { position: absolute; left: 0; top: 0; width: 1820px; height: 982px; pointer-events: none; }
    </style>
    <svg width="1820" height="982" viewBox="0 0 1820 982" fill="#f83c3c">
      <polygon points="652,148 684,152 673,154 ${tail} 668,163 665,172"/>
      <polygon points="1120,446 1143,438 1142,445 ${tail} 1141,453 1140,460"/>
      <polygon points="1144,942 1146,908 1154,916 ${tail} 1162,922 1167,929"/>
    </svg>`;
  }
}
customElements.define('note-arrows', NoteArrows);

const appTpl = make(`
  :host { display: block; position: relative; width: 1820px; height: 982px; overflow: hidden; filter: blur(.4px); }
  .col { display: flex; flex-direction: column; }
  .menu { display: flex; flex: none; height: 44px; align-items: center; }
  .tip { flex: none; width: 283px; height: 38px; margin-top: 2px; display: flex; align-items: center; justify-content: flex-end; padding-right: 52px; box-sizing: border-box; background: #f7f7f7; color: #1c7d7d; }
  .top { display: flex; flex: none; height: 39px; margin-top: 2px; }
  .body { display: flex; height: 859px; margin-top: 6px; }
  .main { width: 1661px; margin-left: 7px; }
  .row { display: flex; flex: none; }
  .low { display: flex; height: 295px; margin-top: 9px; }
  .stack { width: 1642px; display: flex; flex-direction: column; }
  .dim { color: #777; }
`, `
<title-bar>IM钢筋算量软件 GGJ2013 - [C:\\Users\\lenovo\\Documents\\GrandSoft Projects\\GGJ\\12.0\\~E9C6.tmp]</title-bar>
<ime-bar></ime-bar>
<div class="menu">
  <tool-item w="60">辑(E)</tool-item><tool-item w="72">楼层(L)</tool-item><tool-item w="78">构件(N)</tool-item><tool-item w="76">绘图(D)</tool-item><tool-item w="81">修改(M)</tool-item><tool-item w="96">钢筋量(Q)</tool-item><tool-item w="76">视图(V)</tool-item><tool-item w="73">工具(T)</tool-item><tool-item w="92">云应用(Y)</tool-item><tool-item w="104">BIM应用(I)</tool-item><tool-item w="111">在线服务(S)</tool-item><tool-item w="75">帮助(H)</tool-item><tool-item w="92">版本号(B)</tool-item>
  <tool-item w="129" icon="newf" arrow>新建变更</tool-item><tool-item w="113" icon="service">联系客服</tool-item>
  <div class="tip">如何在单构件输入中锁..</div>
  <tool-sep w="6"></tool-sep><tool-item w="98" icon="login" arrow>登录</tool-item><tool-item w="95">造价豆:0</tool-item><tool-item up>»</tool-item>
</div>
<div class="top">
  <tool-item w="32" icon="save"></tool-item><tool-sep w="13" kind="line"></tool-sep><tool-item w="35" icon="undo" arrow></tool-item><tool-item w="55" up style="justify-content:center;padding-left:24px;box-sizing:border-box">»</tool-item>
  <tool-strip w="820" pad="4">
    <tool-item w="81" icon="def">定义</tool-item><tool-item w="108" icon="sigma" gap="1">汇总计算</tool-item><tool-item w="96" icon="cloud">云检查</tool-item><tool-item w="111" icon="level">平齐板顶</tool-item><tool-item w="115" icon="binoc">查找图元</tool-item><tool-item w="129" icon="glasses" gap="4">查看钢筋量</tool-item><tool-item w="158" icon="bulk" gap="5">批量选择</tool-item><tool-sep w="2" kind="line"></tool-sep><tool-item up style="margin-left:6px">»</tool-item>
  </tool-strip>
  <tool-strip w="851" ml="4">
    <tool-item w="101" icon="d2" arrow style="background:#fff;padding-left:7px">二维</tool-item><tool-item w="97" icon="view" arrow>俯视</tool-item><tool-item w="111" icon="orbit">动态观察</tool-item><tool-item w="113" icon="part3d">局部三维</tool-item><tool-sep w="8" kind="line"></tool-sep><tool-item w="78" icon="full">全屏</tool-item><tool-item w="96" icon="zoom" arrow>缩放</tool-item><tool-item w="92" icon="pan" arrow>平移</tool-item><tool-item w="155" icon="rot" arrow>屏幕旋转</tool-item><tool-item up>»</tool-item>
  </tool-strip>
</div>
<div class="body">
  <side-panel></side-panel>
  <div class="main col">
    <div class="row">
      <tool-strip w="1186" h="35" pad="2" ml="2">
        <tool-sep w="12" kind="grip"></tool-sep>
        <tool-item w="77" icon="brush">删除</tool-item><tool-sep w="8" kind="line"></tool-sep><tool-item w="78" icon="copy">复制</tool-item><tool-item w="76" icon="mirror">镜像</tool-item><tool-sep w="11" kind="line"></tool-sep><tool-item w="505" icon="move">移动</tool-item><tool-item w="47">分割</tool-item><tool-sep w="11" kind="line"></tool-sep><tool-item w="87" icon="align" gap="2" arrow>对齐</tool-item><tool-item w="76" icon="offset">偏移</tool-item><tool-item w="76" icon="stretch">拉伸</tool-item><tool-sep w="9" kind="line"></tool-sep><tool-item w="105" icon="graypen" gray>设置夹点</tool-item>
      </tool-strip>
    </div>
    <div class="row" style="margin-top:7px">
      <tool-strip w="957" h="37" ml="2">
        <tool-sep w="11" kind="grip"></tool-sep>
        <combo-box w="86">首层</combo-box><combo-box w="104" ml="4">梁</combo-box><combo-box w="104" ml="5">梁</combo-box><combo-box w="103" ml="4">KL-1</combo-box><combo-box w="105" ml="4">分层1</combo-box>
        <tool-sep w="16" kind="line"></tool-sep><tool-item w="72" icon="prop">属性</tool-item><tool-item w="112" icon="edit" on>编辑钢筋</tool-item><tool-sep w="6"></tool-sep><tool-item w="115" icon="list" gap="5">构件列表</tool-item><tool-item w="100" icon="pick">拾取构件</tool-item>
      </tool-strip>
      <tool-strip w="631" h="37" ml="4">
        <tool-sep w="14" kind="grip"></tool-sep><tool-item w="77" icon="two">两点</tool-item><tool-item w="77" icon="par">平行</tool-item><tool-item w="93" icon="ang" arrow>点角</tool-item><tool-item w="131" icon="arc3" arrow>三点辅轴</tool-item><tool-item w="113" icon="brush">删除辅轴</tool-item><tool-item w="120" icon="dim" gap="5" arrow>尺寸标注</tool-item>
      </tool-strip>
    </div>
    <div class="row" style="margin-top:6px">
      <tool-strip w="1610" h="38" pad="0" ml="2">
        <tool-sep w="20" kind="grip"></tool-sep><tool-item w="90" icon="cursor" gap="0" arrow>选择</tool-item><tool-sep w="10" kind="line"></tool-sep><tool-item w="74" icon="line" gap="4">直线</tool-item><tool-item w="116" icon="ptlen">点加长度</tool-item><tool-item w="125" icon="arc" gap="3" arrow>三点画弧</tool-item><combo-box w="74"></combo-box><tool-sep w="18"></tool-sep><tool-item w="74" icon="rect">矩形</tool-item><tool-sep w="10" kind="line"></tool-sep><tool-item w="122" icon="smart" gap="5" arrow>智能布置</tool-item><tool-sep w="6" kind="line"></tool-sep><tool-item w="152" icon="modseg" gap="10">修改梁段属性</tool-item><tool-item w="131" icon="inplace" arrow>原位标注</tool-item><tool-item w="130" icon="reext" gap="4" arrow>重提梁跨</tool-item><tool-item w="169" icon="spancopy" gap="5" arrow>梁跨数据复制</tool-item><tool-item w="278" icon="support" gap="5">批量识别梁支座</tool-item><tool-item up>»</tool-item>
      </tool-strip>
      <tool-sep w="12" kind="grip"></tool-sep>
    </div>
    <cad-canvas style="margin-top:4px"></cad-canvas>
    <div class="row" style="margin-top:1px">
      <tool-strip w="1330" h="42" pad="2">
        <tool-sep w="14" kind="grip"></tool-sep><tool-item w="73" icon="ortho" gap="8">正交</tool-item><tool-item w="112" icon="snap" on>对象捕捉</tool-item><tool-item w="112" icon="dyn" on>动态输入</tool-item><tool-sep w="21" kind="grip"></tool-sep><tool-item w="72" icon="cross" gap="8">交点</tool-item><tool-item w="75" icon="perp" on>垂点</tool-item><tool-sep w="7"></tool-sep><tool-item w="71" icon="mid" gap="5">中点</tool-item><tool-item w="76" icon="apex" on>顶点</tool-item><tool-sep w="5"></tool-sep><tool-item w="70" icon="coord" gap="5">坐标</tool-item><tool-sep w="18" kind="grip"></tool-sep><combo-box w="85" style="padding-left:2px">不偏移</combo-box><tool-sep w="11" kind="line"></tool-sep><tool-item w="30"><span class="dim" style="letter-spacing:2px">X=</span></tool-item><spin-input w="85">0</spin-input><tool-item w="43"><span class="dim" style="margin-left:4px">mm</span></tool-item><tool-item w="28"><span class="dim" style="letter-spacing:1px">Y=</span></tool-item><spin-input w="86">0</spin-input><tool-item w="42"><span class="dim" style="margin-left:3px">mm</span></tool-item><tool-sep w="5" kind="line"></tool-sep><tool-item w="30"><span style="width:14px;height:14px;border:1px solid #888;background:#f8f8f8"></span></tool-item><tool-item w="42">旋转</tool-item><spin-input w="101">0.000</spin-input><tool-item w="14"><span class="dim" style="margin-left:4px">°</span></tool-item>
      </tool-strip>
    </div>
    <div class="low">
      <grip-rail></grip-rail>
      <div class="stack">
        <tool-strip h="34" pad="9" ml="2" style="margin-bottom:6px">
          <tool-item w="38" icon="first"></tool-item><tool-item w="35" icon="prev"></tool-item><tool-item w="34" icon="next"></tool-item><tool-item w="29" icon="last"></tool-item><tool-sep w="12" kind="line"></tool-sep><tool-item w="35" icon="up"></tool-item><tool-item w="31" icon="down"></tool-item><tool-sep w="9" kind="line"></tool-sep><tool-item w="75" icon="ins" gray>插入</tool-item><tool-item w="80" icon="del2" gray>删除</tool-item><tool-item w="111" icon="scale" gap="3">缩尺配筋</tool-item><tool-item w="111" icon="info" gap="4">钢筋信息</tool-item><tool-item w="112" icon="lib" gap="5">钢筋图库</tool-item><tool-item w="92" icon="other" arrow>其他</tool-item><tool-item w="49">关闭</tool-item><tool-sep w="10" kind="line"></tool-sep><tool-item style="letter-spacing:.6px">单构件钢筋总重(kg): 435.74</tool-item>
        </tool-strip>
        <rebar-table></rebar-table>
        <table-scroll></table-scroll>
      </div>
    </div>
  </div>
</div>
<flyout-bar>
  <tool-item w="109" icon="r3d">钢筋三维</tool-item><tool-item w="80" icon="lock" on>锁定</tool-item><tool-item w="81" icon="unlock">解锁</tool-item><tool-item icon="brush" gap="3">批量删除未使用构件</tool-item>
</flyout-bar>
<float-ball></float-ball>
<note-arrows></note-arrows>
`);

class GgjApp extends HTMLElement {
  constructor() {
    super();
    this.attachShadow({ mode: 'open' }).appendChild(appTpl.content.cloneNode(true));
  }
}
customElements.define('ggj-app', GgjApp);
</script>
</body>
</html>
